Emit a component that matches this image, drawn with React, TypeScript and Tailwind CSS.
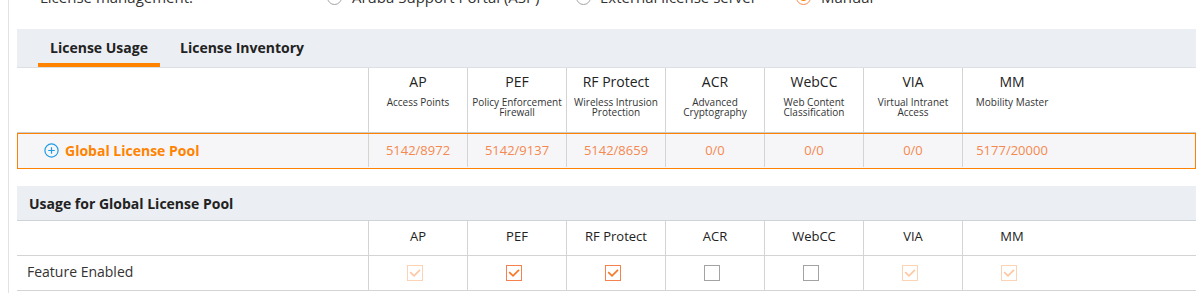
import React from "react";

type CheckState = "disabled" | "checked" | "off";

const features: {
  code: string;
  name: string[];
  total: string;
  state: CheckState;
}[] = [
  { code: "AP", name: ["Access Points"], total: "5142/8972", state: "disabled" },
  { code: "PEF", name: ["Policy Enforcement", "Firewall"], total: "5142/9137", state: "checked" },
  { code: "RF Protect", name: ["Wireless Intrusion", "Protection"], total: "5142/8659", state: "checked" },
  { code: "ACR", name: ["Advanced", "Cryptography"], total: "0/0", state: "off" },
  { code: "WebCC", name: ["Web Content", "Classification"], total: "0/0", state: "off" },
  { code: "VIA", name: ["Virtual Intranet", "Access"], total: "0/0", state: "disabled" },
  { code: "MM", name: ["Mobility Master"], total: "5177/20000", state: "disabled" },
];

function Radio({ on }: { on?: boolean }) {
  return (
    <span
      className={`flex h-[15px] w-[15px] shrink-0 items-center justify-center rounded-full border bg-white ${
        on ? "border-[#f7894e]" : "border-[#a3a3a3]"
      }`}
    >
      {on && <span className="h-[7px] w-[7px] rounded-full bg-[#ff8300]" />}
    </span>
  );
}

function Check({ state }: { state: CheckState }) {
  const box =
    state === "disabled"
      ? "border-[#fdd3b5]"
      : state === "checked"
        ? "border-[#f5814f]"
        : "border-[#a3a3a3]";
  const mark = state === "disabled" ? "#fdc8a3" : "#f7782a";
  return (
    <span className={`mr-[6px] flex h-[16px] w-[16px] items-center justify-center border bg-white ${box}`}>
      {state !== "off" && (
        <svg width="12" height="10" viewBox="0 0 12 10" fill="none">
          <path d="M1.2 4.2 L5 7.9 L11 1.8" stroke={mark} strokeWidth="1.7" />
        </svg>
      )}
    </span>
  );
}

function PlusCircle() {
  return (
    <svg width="15" height="15" viewBox="0 0 15 15" fill="none">
      <circle cx="7.5" cy="7.5" r="6.6" stroke="#1f9be3" strokeWidth="1.2" />
      <path d="M7.5 4.2 V10.8 M4.2 7.5 H10.8" stroke="#1f9be3" strokeWidth="1.2" />
    </svg>
  );
}

export default function App() {
  return (
    <div className="h-[293px] overflow-hidden bg-white pl-2 font-['Open_Sans',sans-serif] text-[#333]">
      <div className="h-full border-l border-[#e2e2e2] pl-2">
        {/* ── License management radios (scrolled partly off) ── */}
        <div className="flex h-[29px] items-start">
          <div className="-mt-[13px] flex h-5 items-center pl-[23px] text-[15px] leading-5">
            <span className="w-[287px]">License management:</span>
            <label className="flex w-[249px] items-center gap-[10px]">
              <Radio />
              Aruba Support Portal (ASP)
            </label>
            <label className="flex w-[220px] items-center gap-[9px]">
              <Radio />
              External license server
            </label>
            <label className="flex items-center gap-[10px]">
              <Radio on />
              Manual
            </label>
          </div>
        </div>

        {/* ── Tabs ── */}
        <div className="flex h-[39px] border-b border-[#dcdfe3] bg-[#ebeef2] text-[14px] font-bold leading-5 text-[#222]">
          <div className="ml-[21px] h-[38px] w-[122px] border-b-4 border-[#ff8300] pt-[9px] text-center">
            License Usage
          </div>
          <div className="ml-[10px] h-[38px] px-[10px] pt-[9px]">License Inventory</div>
        </div>

        {/* ── Usage header ── */}
        <div className="grid h-[65px] grid-cols-[351px_repeat(7,99px)_1fr] border-b border-[#cccccc]">
          <div />
          {features.map((f) => (
            <div key={f.code} className="border-l border-[#d4d4d4] pt-[4px] text-center">
              <div className="text-[14px] leading-5 text-[#222]">{f.code}</div>
              <div className="mt-[5px] whitespace-nowrap text-[10px] leading-[10px] text-[#333]">
                {f.name.map((n) => (
                  <div key={n}>{n}</div>
                ))}
              </div>
            </div>
          ))}
          <div />
        </div>

        {/* ── Global License Pool row ── */}
        <div className="grid h-[36px] grid-cols-[350px_repeat(7,99px)_1fr] border border-[#ff8300] bg-[#f6f6f8] pb-[1px]">
          <div className="flex items-center gap-[6px] pl-[26px] text-[14px] font-bold text-[#ff8300]">
            <PlusCircle />
            Global License Pool
          </div>
          {features.map((f) => (
            <div
              key={f.code}
              className="flex items-center justify-center border-l border-[#d4d4d4] text-[13px] text-[#f5884f]"
            >
              {f.total}
            </div>
          ))}
          <div />
        </div>

        {/* ── Usage for Global License Pool ── */}
        <div className="mt-[17px] flex h-[35px] items-center border-b border-[#cfd2d6] bg-[#ebeef2] pl-[12px] text-[14px] font-bold text-[#222]">
          Usage for Global License Pool
        </div>

        <div className="grid h-[35px] grid-cols-[351px_repeat(7,99px)_1fr] border-b border-[#d4d4d4]">
          <div />
          {features.map((f) => (
            <div
              key={f.code}
              className="flex items-center justify-center border-l border-[#d4d4d4] pb-[3px] text-[13px] text-[#222]"
            >
              {f.code}
            </div>
          ))}
          <div />
        </div>

        <div className="grid h-[35px] grid-cols-[351px_repeat(7,99px)_1fr] border-b border-[#d4d4d4]">
          <div className="flex items-center pb-[3px] pl-[10px] text-[14px] text-[#333]">Feature Enabled</div>
          {features.map((f) => (
            <div key={f.code} className="flex items-center justify-center border-l border-[#d4d4d4]">
              <Check state={f.state} />
            </div>
          ))}
          <div />
        </div>
      </div>
    </div>
  );
}
